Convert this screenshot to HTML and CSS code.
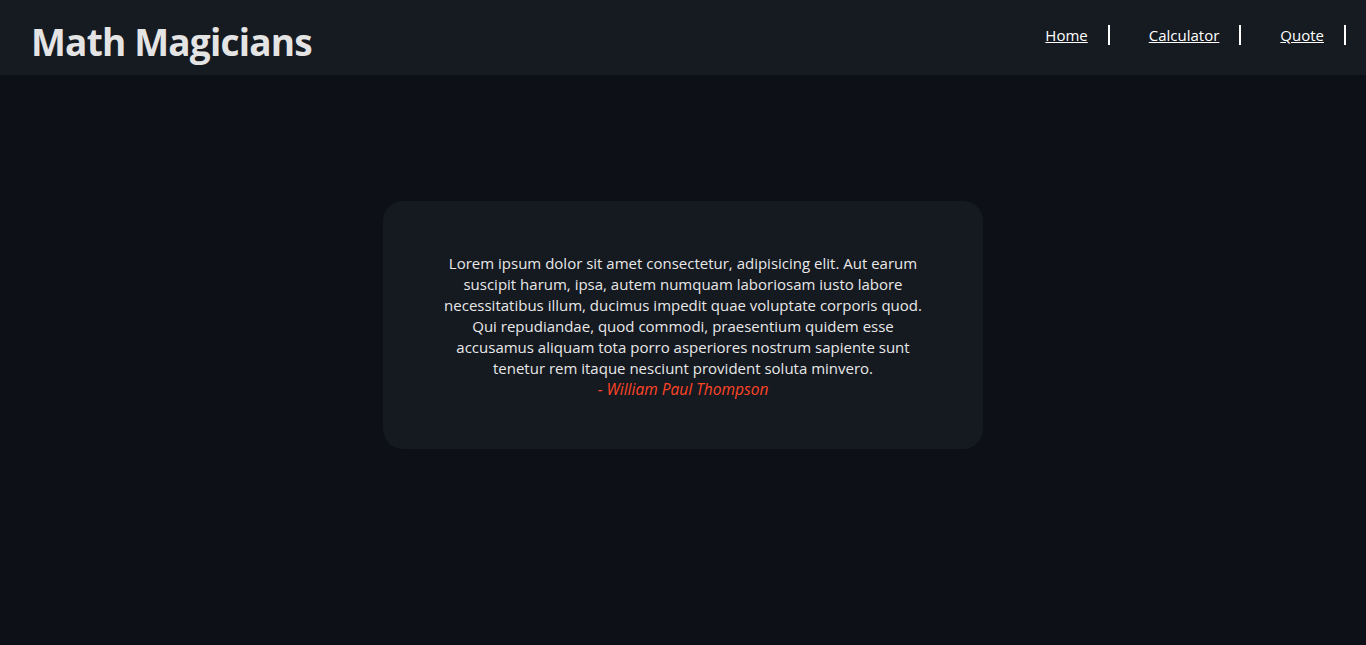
FILE: index.html
```html
<!DOCTYPE html>
<html lang="en">
<head>
<meta charset="utf-8">
<title>Math Magicians</title>
<link rel="stylesheet" href="styles.css">
</head>
<body>
<header class="header">
  <h1 class="logo">Math Magicians</h1>
  <nav class="nav">
    <ul class="nav-list">
      <li class="nav-item"><a href="#" class="nav-link">Home</a></li>
      <li class="nav-item"><a href="#" class="nav-link">Calculator</a></li>
      <li class="nav-item"><a href="#" class="nav-link">Quote</a></li>
    </ul>
  </nav>
</header>
<main class="main">
  <div class="quote-card">
    <p class="quote-text">Lorem ipsum dolor sit amet consectetur, adipisicing elit. Aut earum suscipit harum, ipsa, autem numquam laboriosam iusto labore necessitatibus illum, ducimus impedit quae voluptate corporis quod. Qui repudiandae, quod commodi, praesentium quidem esse accusamus aliquam tota porro asperiores nostrum sapiente sunt tenetur rem itaque nesciunt provident soluta minvero.</p>
    <p class="quote-author">- William Paul Thompson</p>
  </div>
</main>
</body>
</html>
```
FILE: styles.css
```css
* { box-sizing: border-box; }
html, body { margin: 0; padding: 0; }
body {
  background: #0d1017;
  color: #e6e6e6;
  font-family: "Open Sans", "Noto Sans", sans-serif;
  min-height: 645px;
}
.header {
  height: 75px;
  background: #161a21;
  display: flex;
  align-items: center;
  justify-content: space-between;
  padding: 0 20px 0 31px;
}
.logo {
  margin: 0;
  font-family: "Open Sans", sans-serif;
  font-weight: 700;
  font-size: 37px;
  color: #e4e4e4;
  letter-spacing: -0.8px;
  padding-top: 7px;
}
.nav {
  margin-bottom: 6px;
}
.nav-list {
  list-style: none;
  margin: 0;
  padding: 0;
  display: flex;
  align-items: center;
  gap: 39px;
}
.nav-item {
  display: flex;
  align-items: center;
  gap: 20px;
  border-right: 2px solid #ffffff;
  padding-right: 20px;
  height: 20px;
}
.nav-link {
  color: #ffffff;
  font-size: 15px;
  text-decoration: underline;
  line-height: 20px;
}
.main {
  display: flex;
  justify-content: center;
  padding-top: 126px;
}
.quote-card {
  width: 600px;
  height: 248px;
  background: #151920;
  border-radius: 20px;
  padding: 52px 60px 0;
  text-align: center;
}
.quote-text {
  margin: 0;
  font-size: 15px;
  line-height: 21px;
  color: #e8e8e8;
}
.quote-author {
  margin: 0;
  font-size: 15.5px;
  line-height: 21px;
  font-style: italic;
  color: #ff4527;
}
```
